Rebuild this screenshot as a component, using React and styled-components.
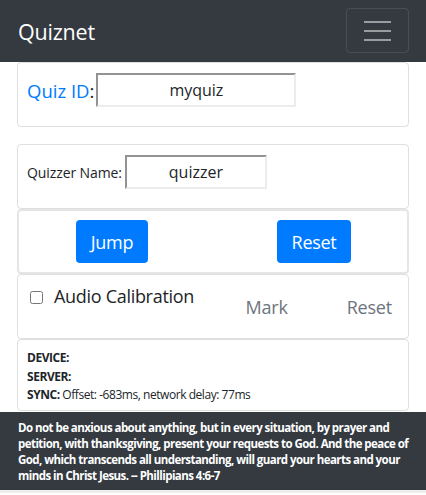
import React from 'react';
import styled, { createGlobalStyle } from 'styled-components';

const Global = createGlobalStyle`
  body {
    margin: 0;
    background: #fff;
    font-family: "Open Sans", "Noto Sans", sans-serif;
    color: #212529;
  }
`;

const Nav = styled.nav`
  height: 62px;
  background: #343a40;
  display: flex;
  align-items: center;
  justify-content: space-between;
  padding: 0 18px;
  box-sizing: border-box;
`;

const Brand = styled.div`
  color: #fff;
  font-size: 21.5px;
  letter-spacing: -0.2px;
`;

const Toggler = styled.button`
  width: 63px;
  height: 45px;
  margin-right: -1px;
  margin-top: -1px;
  background: transparent;
  border: 1px solid rgba(255, 255, 255, 0.1);
  border-radius: 4px;
  display: flex;
  flex-direction: column;
  align-items: center;
  justify-content: center;
  gap: 7px;
  padding: 0;
`;

const Bar = styled.span`
  display: block;
  width: 27px;
  height: 2px;
  background: rgba(255, 255, 255, 0.5);
`;

const Main = styled.main`
  padding: 0 17px;
`;

const Card = styled.section`
  border: ${p => (p.$thick ? '2px' : '1px')} solid rgba(0, 0, 0, ${p => (p.$thick ? 0.1 : 0.125)});
  border-radius: 4px;
  height: ${p => p.$h}px;
  box-sizing: border-box;
  margin-top: ${p => p.$mt || 0}px;
  padding: ${p => p.$pad || '0 9px'};
  display: flex;
  align-items: ${p => p.$align || 'center'};
`;

const Field = styled.div`
  display: flex;
  align-items: center;
`;

const Label = styled.label`
  font-size: ${p => p.$size}px;
  color: #212529;
  margin-right: ${p => p.$mr}px;
  letter-spacing: ${p => p.$ls || 0}px;
`;

const Blue = styled.span`
  color: #007bff;
`;

const TextInput = styled.input`
  width: ${p => p.$w}px;
  height: 34px;
  box-sizing: border-box;
  border: 2px solid #ececec;
  border-top-color: #939393;
  border-left-color: #939393;
  text-align: center;
  font-family: "Open Sans", sans-serif;
  font-size: 16px;
  color: #212529;
  padding: 0;
  outline: none;
`;

const ButtonRow = styled.div`
  display: flex;
  justify-content: space-between;
  box-sizing: border-box;
  width: 100%;
  padding: 0 47px 0 48px;
`;

const PrimaryButton = styled.button`
  width: ${p => p.$w}px;
  height: 43px;
  background: #007bff;
  color: #fff;
  border: none;
  border-radius: 4px;
  font-family: "Open Sans", sans-serif;
  font-size: 18px;
  letter-spacing: -0.3px;
  padding: 0;
`;

const CalibRow = styled.div`
  display: flex;
  align-items: flex-start;
  width: 100%;
`;

const Check = styled.input`
  width: 13px;
  height: 13px;
  margin: 7px 11px 0 4px;
`;

const CalibLabel = styled.span`
  font-size: 18px;
  letter-spacing: -0.3px;
  color: #212529;
  flex: 1;
`;

const LinkButton = styled.span`
  font-size: 18px;
  color: #6c757d;
  margin-top: 11px;
  margin-left: ${p => p.$ml}px;
  letter-spacing: -0.2px;
`;

const Status = styled.div`
  font-size: 12px;
  line-height: 18.5px;
  letter-spacing: -0.45px;
`;

const Footer = styled.footer`
  background: #343a40;
  color: #fff;
  font-size: 11.5px;
  font-weight: 700;
  line-height: 16px;
  letter-spacing: -0.55px;
  padding: 8px 13px 0 18px;
  height: 81px;
  box-sizing: border-box;
  margin-top: 1px;
  border-bottom: 3px solid #eeeeee;
`;

export default function App() {
  return (
    <>
      <Global />
      <Nav>
        <Brand>Quiznet</Brand>
        <Toggler aria-label="menu">
          <Bar />
          <Bar />
          <Bar />
        </Toggler>
      </Nav>
      <Main>
        <Card $h={65} $align="flex-start" $pad="10px 9px 0">
          <Field>
            <Label $size={18.5} $mr={2}><Blue>Quiz ID</Blue>:</Label>
            <TextInput $w={200} defaultValue="myquiz" />
          </Field>
        </Card>
        <Card $h={65} $mt={17} $align="flex-start" $pad="10px 9px 0">
          <Field>
            <Label $size={14} $mr={3} $ls={-0.1}>Quizzer Name:</Label>
            <TextInput $w={142} defaultValue="quizzer" />
          </Field>
        </Card>
        <Card $h={65} $thick>
          <ButtonRow>
            <PrimaryButton $w={72}>Jump</PrimaryButton>
            <PrimaryButton $w={74}>Reset</PrimaryButton>
          </ButtonRow>
        </Card>
        <Card $h={65} $align="flex-start" $pad="9px 9px 0 8px">
          <CalibRow>
            <Check type="checkbox" />
            <CalibLabel>Audio Calibration</CalibLabel>
            <LinkButton $ml={0}>Mark</LinkButton>
            <LinkButton $ml={59}>Reset</LinkButton>
            <span style={{ width: 7 }} />
          </CalibRow>
        </Card>
        <Card $h={72} $align="flex-start" $pad="9px 9px 0 9px">
          <Status>
            <b>DEVICE:</b><br />
            <b>SERVER:</b><br />
            <b>SYNC:</b> Offset: -683ms, network delay: 77ms
          </Status>
        </Card>
      </Main>
      <Footer>
        Do not be anxious about anything, but in every situation, by prayer and petition, with
        thanksgiving, present your requests to God. And the peace of God, which transcends all
        understanding, will guard your hearts and your minds in Christ Jesus. -- Phillipians 4:6-7
      </Footer>
    </>
  );
}
